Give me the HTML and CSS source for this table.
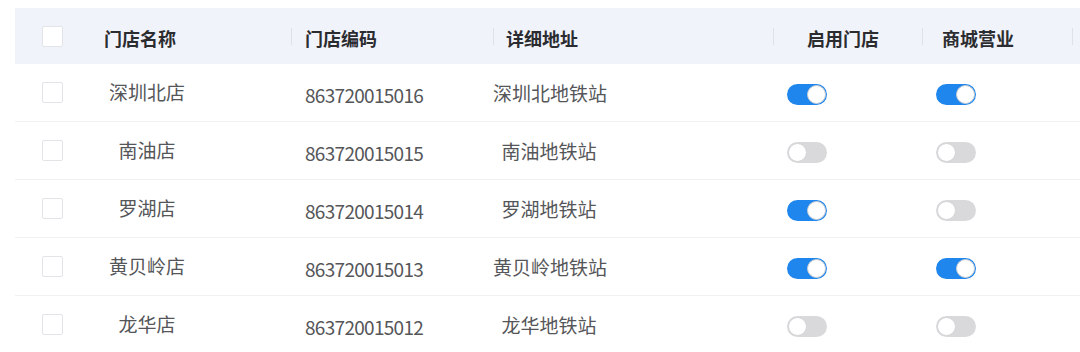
FILE: index.html
```html
<!DOCTYPE html>
<html lang="zh-CN">
<head>
<meta charset="utf-8">
<title>门店列表</title>
<link rel="stylesheet" href="styles.css">
</head>
<body>
<div class="table">
  <div class="row head">
    <div class="cell c-check"><span class="checkbox"></span></div>
    <div class="cell c-name"><span class="h-text">门店名称</span></div>
    <div class="cell c-code sep"><span class="h-text">门店编码</span></div>
    <div class="cell c-addr sep"><span class="h-text">详细地址</span></div>
    <div class="cell c-open sep"><span class="h-text">启用门店</span></div>
    <div class="cell c-mall sep"><span class="h-text">商城营业</span></div>
    <div class="cell c-rest sep"></div>
  </div>

  <div class="row body">
    <div class="cell c-check"><span class="checkbox"></span></div>
    <div class="cell c-name"><span class="name">深圳北店</span></div>
    <div class="cell c-code"><span class="code">863720015016</span></div>
    <div class="cell c-addr"><span class="addr">深圳北地铁站</span></div>
    <div class="cell c-open"><span class="switch on"></span></div>
    <div class="cell c-mall"><span class="switch on"></span></div>
    <div class="cell c-rest"></div>
  </div>

  <div class="row body">
    <div class="cell c-check"><span class="checkbox"></span></div>
    <div class="cell c-name"><span class="name">南油店</span></div>
    <div class="cell c-code"><span class="code">863720015015</span></div>
    <div class="cell c-addr"><span class="addr">南油地铁站</span></div>
    <div class="cell c-open"><span class="switch"></span></div>
    <div class="cell c-mall"><span class="switch"></span></div>
    <div class="cell c-rest"></div>
  </div>

  <div class="row body">
    <div class="cell c-check"><span class="checkbox"></span></div>
    <div class="cell c-name"><span class="name">罗湖店</span></div>
    <div class="cell c-code"><span class="code">863720015014</span></div>
    <div class="cell c-addr"><span class="addr">罗湖地铁站</span></div>
    <div class="cell c-open"><span class="switch on"></span></div>
    <div class="cell c-mall"><span class="switch"></span></div>
    <div class="cell c-rest"></div>
  </div>

  <div class="row body">
    <div class="cell c-check"><span class="checkbox"></span></div>
    <div class="cell c-name"><span class="name">黄贝岭店</span></div>
    <div class="cell c-code"><span class="code">863720015013</span></div>
    <div class="cell c-addr"><span class="addr">黄贝岭地铁站</span></div>
    <div class="cell c-open"><span class="switch on"></span></div>
    <div class="cell c-mall"><span class="switch on"></span></div>
    <div class="cell c-rest"></div>
  </div>

  <div class="row body">
    <div class="cell c-check"><span class="checkbox"></span></div>
    <div class="cell c-name"><span class="name">龙华店</span></div>
    <div class="cell c-code"><span class="code">863720015012</span></div>
    <div class="cell c-addr"><span class="addr">龙华地铁站</span></div>
    <div class="cell c-open"><span class="switch"></span></div>
    <div class="cell c-mall"><span class="switch"></span></div>
    <div class="cell c-rest"></div>
  </div>
</div>
</body>
</html>
```

FILE: styles.css
```css
html, body {
  margin: 0;
  padding: 0;
  background: #ffffff;
  overflow: hidden;
}

body {
  padding: 8px 0 0 15px;
  font-family: "Noto Sans CJK SC", "Noto Sans", sans-serif;
  color: #555659;
}

.table {
  display: flex;
  flex-direction: column;
}

.row {
  display: grid;
  grid-template-columns: 73px 203px 202px 280px 149px 150px 1fr;
  height: 58px;
  box-sizing: border-box;
}

.row.body {
  border-bottom: 1px solid #f1f1f3;
}

.row.head {
  height: 56px;
  background: #f1f3fb;
}

.cell {
  display: flex;
  align-items: center;
  min-width: 0;
}

/* header */
.head .cell {
  padding-top: 3px;
  box-sizing: border-box;
}

.sep::before {
  content: "";
  display: block;
  width: 1px;
  height: 17px;
  background: #dfe1e8;
  margin-top: -3px;
  flex: none;
}

.h-text {
  font-size: 18px;
  font-weight: 700;
  color: #2b2c30;
  white-space: nowrap;
}

.head .c-check {
  padding-top: 0;
}

.head .c-name .h-text { margin-left: 16px; }
.head .c-code .h-text { margin-left: 13px; }
.head .c-addr .h-text { margin-left: 12px; }
.head .c-open .h-text { margin-left: 33px; }
.head .c-mall .h-text { margin-left: 19px; }

/* checkbox */
.c-check {
  padding-left: 27px;
}

.checkbox {
  display: block;
  width: 19px;
  height: 19px;
  border: 1px solid #e3e4e8;
  border-radius: 2px;
  background: #ffffff;
}

/* body cells */
.name {
  display: block;
  width: 118px;
  text-align: center;
  font-size: 19px;
  margin-top: -2px;
  white-space: nowrap;
}

.body .c-code {
  padding-left: 14px;
  padding-top: 4px;
}

.code {
  font-size: 19px;
  letter-spacing: -0.7px;
  white-space: nowrap;
}

.addr {
  display: block;
  width: 112px;
  text-align: center;
  font-size: 19px;
  white-space: nowrap;
}

.body .c-open,
.body .c-mall {
  padding-left: 14px;
  padding-top: 4px;
}

/* switch */
.switch {
  display: block;
  position: relative;
  width: 40px;
  height: 21px;
  border-radius: 11px;
  background: #d9d9db;
  box-sizing: border-box;
}

.switch::after {
  content: "";
  position: absolute;
  top: 1px;
  left: 1px;
  width: 19px;
  height: 19px;
  box-sizing: border-box;
  border-radius: 50%;
  background: #ffffff;
  border: 1px solid #d4d5d8;
}

.switch.on {
  background: #1f86ee;
}

.switch.on::after {
  left: 20px;
  border-color: #c9ccd2;
}
```
